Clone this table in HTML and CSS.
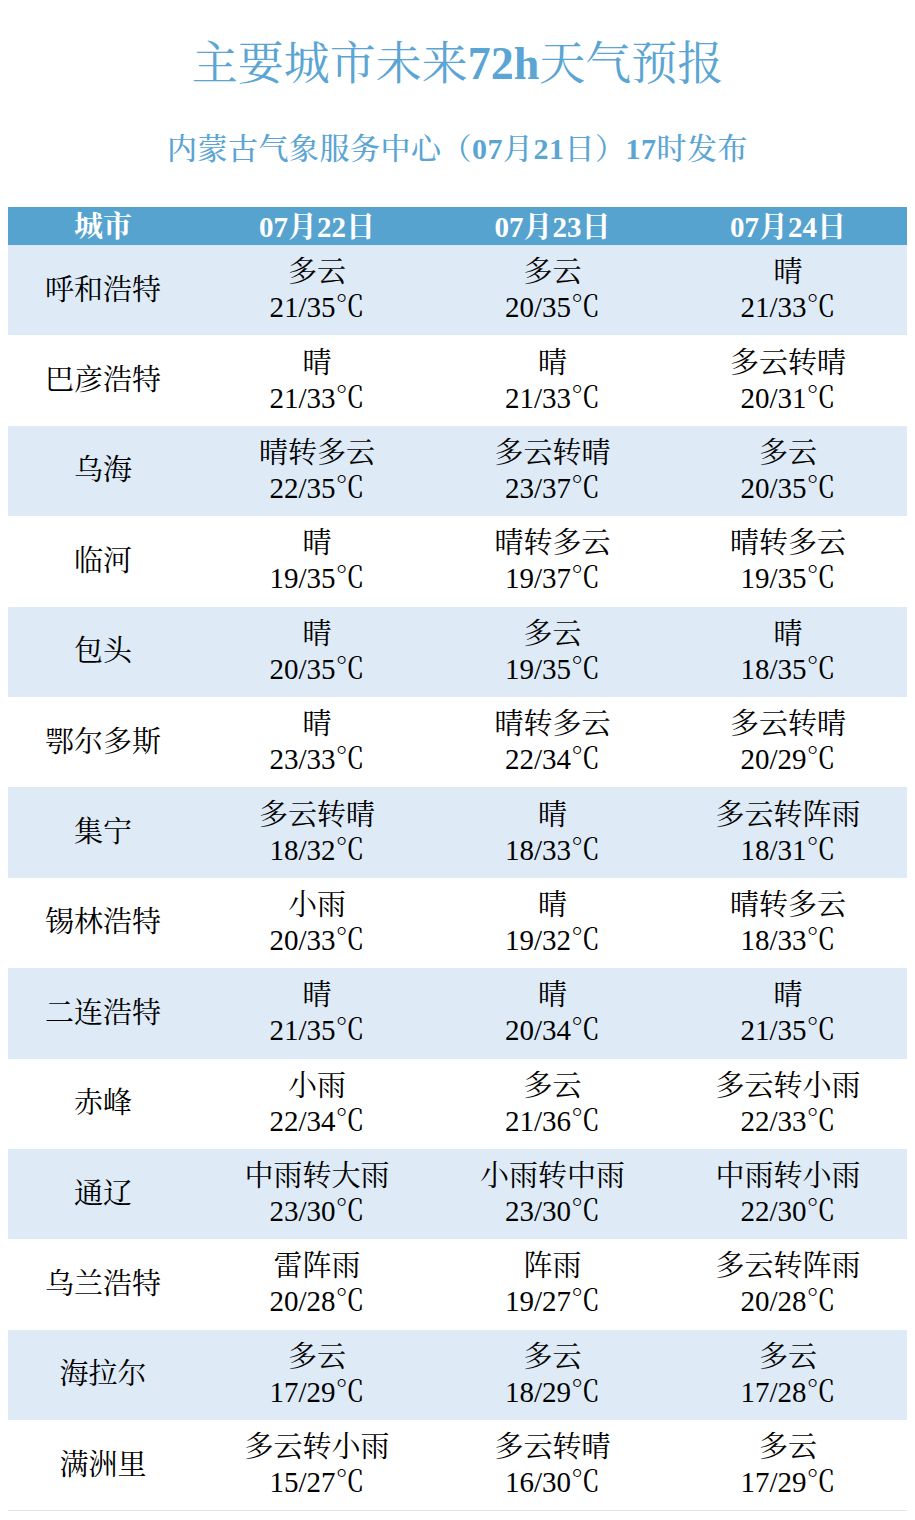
FILE: index.html
```html
<!DOCTYPE html>
<html lang="zh-CN">
<head>
<meta charset="utf-8">
<title>主要城市未来72h天气预报</title>
<link rel="stylesheet" href="styles.css">
</head>
<body>
<div class="page">
  <h1 class="title">主要城市未来<b>72h</b>天气预报</h1>
  <p class="subtitle">内蒙古气象服务中心（<b>07</b>月<b>21</b>日）<b>17</b>时发布</p>
  <table class="forecast">
    <colgroup>
      <col class="c-city"><col class="c-day"><col class="c-day3"><col class="c-day">
    </colgroup>
    <thead>
      <tr><th>城市</th><th>07月22日</th><th>07月23日</th><th>07月24日</th></tr>
    </thead>
    <tbody>
      <tr><td class="city">呼和浩特</td><td>多云<br>21/35℃</td><td>多云<br>20/35℃</td><td>晴<br>21/33℃</td></tr>
      <tr><td class="city">巴彦浩特</td><td>晴<br>21/33℃</td><td>晴<br>21/33℃</td><td>多云转晴<br>20/31℃</td></tr>
      <tr><td class="city">乌海</td><td>晴转多云<br>22/35℃</td><td>多云转晴<br>23/37℃</td><td>多云<br>20/35℃</td></tr>
      <tr><td class="city">临河</td><td>晴<br>19/35℃</td><td>晴转多云<br>19/37℃</td><td>晴转多云<br>19/35℃</td></tr>
      <tr><td class="city">包头</td><td>晴<br>20/35℃</td><td>多云<br>19/35℃</td><td>晴<br>18/35℃</td></tr>
      <tr><td class="city">鄂尔多斯</td><td>晴<br>23/33℃</td><td>晴转多云<br>22/34℃</td><td>多云转晴<br>20/29℃</td></tr>
      <tr><td class="city">集宁</td><td>多云转晴<br>18/32℃</td><td>晴<br>18/33℃</td><td>多云转阵雨<br>18/31℃</td></tr>
      <tr><td class="city">锡林浩特</td><td>小雨<br>20/33℃</td><td>晴<br>19/32℃</td><td>晴转多云<br>18/33℃</td></tr>
      <tr><td class="city">二连浩特</td><td>晴<br>21/35℃</td><td>晴<br>20/34℃</td><td>晴<br>21/35℃</td></tr>
      <tr><td class="city">赤峰</td><td>小雨<br>22/34℃</td><td>多云<br>21/36℃</td><td>多云转小雨<br>22/33℃</td></tr>
      <tr><td class="city">通辽</td><td>中雨转大雨<br>23/30℃</td><td>小雨转中雨<br>23/30℃</td><td>中雨转小雨<br>22/30℃</td></tr>
      <tr><td class="city">乌兰浩特</td><td>雷阵雨<br>20/28℃</td><td>阵雨<br>19/27℃</td><td>多云转阵雨<br>20/28℃</td></tr>
      <tr><td class="city">海拉尔</td><td>多云<br>17/29℃</td><td>多云<br>18/29℃</td><td>多云<br>17/28℃</td></tr>
      <tr><td class="city">满洲里</td><td>多云转小雨<br>15/27℃</td><td>多云转晴<br>16/30℃</td><td>多云<br>17/29℃</td></tr>
    </tbody>
  </table>
</div>
</body>
</html>
```
FILE: styles.css
```css
html, body {
  margin: 0;
  padding: 0;
  background: #ffffff;
}
.page {
  width: 915px;
  padding-top: 34px;
  font-family: "Liberation Serif", "Noto Serif CJK SC", "Noto Sans CJK SC", serif;
  color: #000;
}
.title {
  margin: 0;
  font-size: 46px;
  line-height: 60px;
  font-weight: 400;
  text-align: center;
  color: #5aa5d3;
}
.title b { font-weight: 700; }
.subtitle {
  margin: 35px 0 0;
  font-size: 30px;
  line-height: 40px;
  font-weight: 500;
  text-align: center;
  color: #5aa5d3;
  letter-spacing: 0.5px;
}
.subtitle b { font-weight: 700; }
.forecast {
  margin: 38px 0 0 8px;
  width: 899px;
  border-collapse: collapse;
  table-layout: fixed;
  border-bottom: 1px solid #e2e4e6;
}
.c-city { width: 190px; }
.c-day { width: 238px; }
.c-day3 { width: 233px; }
.forecast th {
  background: #56a3d0;
  color: #ffffff;
  font-size: 29px;
  font-weight: 700;
  height: 36px;
  line-height: 36px;
  padding: 2px 0 0;
  text-align: center;
}
.forecast td {
  height: 90.4px;
  padding: 0;
  font-size: 29px;
  line-height: 35px;
  text-align: center;
  vertical-align: middle;
}
.forecast tbody tr:nth-child(odd) td {
  background: #deebf7;
}
```
